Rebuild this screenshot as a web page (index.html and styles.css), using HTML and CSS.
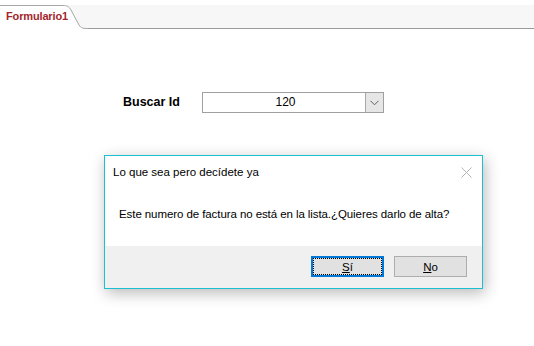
FILE: index.html
```html
<!DOCTYPE html>
<html>
<head>
<title>Formulario1</title>
<link rel="stylesheet" href="styles.css">
</head>
<body>

<div class="tabbar">
  <div class="tab">
    <svg class="tab-shape" width="90" height="24" viewBox="0 0 90 24">
      <path d="M0 0.5 H63 C67 0.5 69 1.5 71 5 L79 20 C81 23 83 23.5 88 23.5 V24 H0 Z" fill="#fff"/>
      <path d="M0 0.5 H63 C67 0.5 69 1.5 71 5 L79 20 C81 23 83 23.5 88 23.5" fill="none" stroke="#a8a8a8" stroke-width="1"/>
    </svg>
    <span class="tab-label">Formulario1</span>
  </div>
</div>

<div class="form">
  <div class="field">
    <label class="field-label" for="buscar-id">Buscar Id</label>
    <div class="combo" id="buscar-id">
      <span class="combo-value">120</span>
      <span class="combo-button">
        <svg width="9" height="6" viewBox="0 0 9 6"><path d="M0.5 0.8 L4.5 4.8 L8.5 0.8" fill="none" stroke="#606060" stroke-width="1"/></svg>
      </span>
    </div>
  </div>
</div>

<div class="dialog">
  <div class="dialog-title">
    <span>Lo que sea pero decídete ya</span>
    <svg class="dialog-close" width="11" height="11" viewBox="0 0 11 11"><path d="M0.5 0.5 L10.5 10.5 M10.5 0.5 L0.5 10.5" stroke="#b4b4b4" stroke-width="1"/></svg>
  </div>
  <div class="dialog-message">Este numero de factura no está en la lista.¿Quieres darlo de alta?</div>
  <div class="dialog-buttons">
    <button class="btn btn-default"><u>S</u>í</button>
    <button class="btn"><u>N</u>o</button>
  </div>
</div>

</body>
</html>
```

FILE: styles.css
```css
body {
  margin: 0;
  width: 534px;
  height: 346px;
  overflow: hidden;
  position: relative;
  background-color: #fff;
  font-family: "Liberation Sans", Arial, sans-serif;
  color: #000;
}

/* Tab strip at the top */
.tabbar {
  margin-top: 5px;
  height: 23px;
  background-color: #f7f7f7;
  border-bottom: 1px solid #9a9a9a;
  display: flex;
}

.tab {
  position: relative;
  width: 88px;
  height: 24px;
}

.tab-shape {
  position: absolute;
  left: 0;
  top: 0;
}

.tab-label {
  position: relative;
  display: block;
  padding: 5px 0 0 6px;
  font-size: 11px;
  font-weight: bold;
  letter-spacing: -0.15px;
  color: #a4262c;
}

/* Search field */
.form {
  padding: 63px 0 0 123px;
}

.field {
  display: flex;
  align-items: center;
}

.field-label {
  width: 79px;
  font-size: 12.5px;
  font-weight: bold;
  margin-top: -2px;
}

.combo {
  width: 180px;
  height: 19px;
  border: 1px solid #a0a0a0;
  display: flex;
}

.combo-value {
  flex: 1;
  text-align: center;
  font-size: 12px;
  line-height: 19px;
  padding-left: 3px;
}

.combo-button {
  width: 17px;
  border-left: 1px solid #a8a8a8;
  background-color: #e6e6e6;
  display: flex;
  align-items: center;
  justify-content: center;
}

/* Message box lying over the form */
.dialog {
  position: absolute;
  left: 104px;
  top: 155px;
  width: 377px;
  border: 1px solid #1bbfd0;
  background-color: #fff;
  box-shadow: 2px 4px 14px rgba(0, 0, 0, 0.28);
  font-size: 11.5px;
}

.dialog-title {
  height: 32px;
  padding: 0 10px 0 8px;
  display: flex;
  align-items: center;
  justify-content: space-between;
}

.dialog-message {
  padding: 18px 0 24px 14px;
  line-height: 16px;
  letter-spacing: -0.08px;
}

.dialog-buttons {
  background-color: #f0f0f0;
  padding: 10px 15px 11px 0;
  display: flex;
  justify-content: flex-end;
  gap: 10px;
}

.btn {
  width: 73px;
  height: 21px;
  padding: 0;
  border: 1px solid #adadad;
  background-color: #e1e1e1;
  font-family: "Liberation Sans", Arial, sans-serif;
  font-size: 11.5px;
  color: #000;
}

.btn-default {
  border: 2px solid #0078d7;
  outline: 1px dotted #000;
  outline-offset: -3px;
}
```
